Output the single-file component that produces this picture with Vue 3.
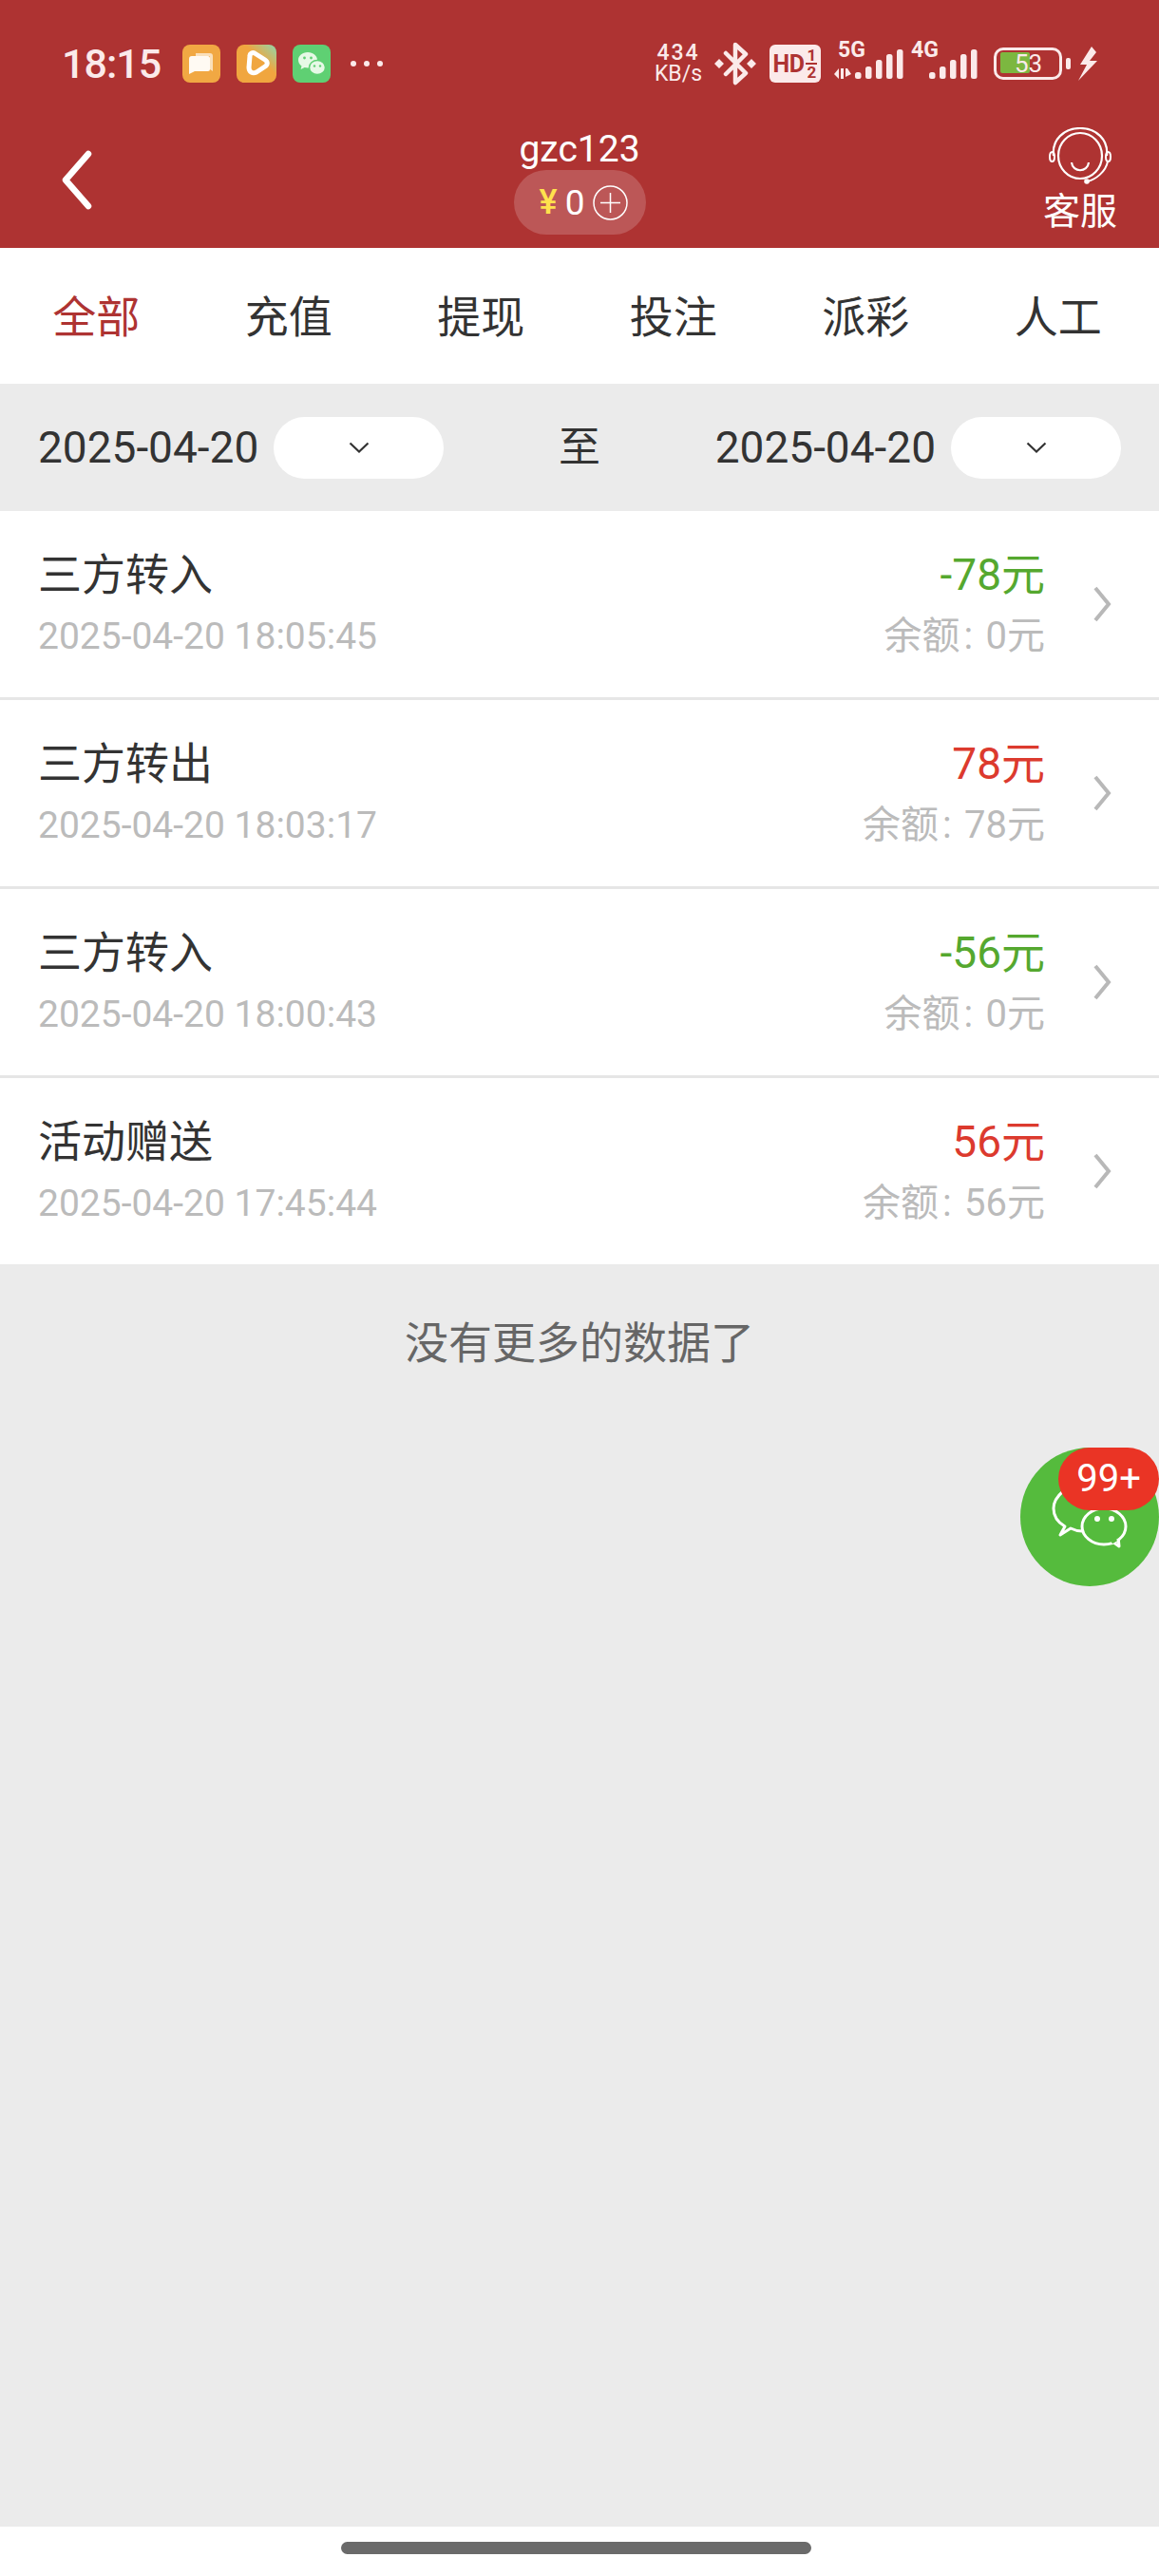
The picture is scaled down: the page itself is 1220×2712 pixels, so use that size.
<script setup>
const tabs = ['全部', '充值', '提现', '投注', '派彩', '人工']
const rows = [
  { title: '三方转入', time: '2025-04-20 18:05:45', amount: '-78元', balance: '0元', income: false },
  { title: '三方转出', time: '2025-04-20 18:03:17', amount: '78元', balance: '78元', income: true },
  { title: '三方转入', time: '2025-04-20 18:00:43', amount: '-56元', balance: '0元', income: false },
  { title: '活动赠送', time: '2025-04-20 17:45:44', amount: '56元', balance: '56元', income: true }
]
const bars5 = [7, 13, 20, 26, 31]
</script>

<template>
  <div class="page">
    <header class="header">
      <div class="status">
        <span class="clock">18:15</span>
        <svg class="app first" width="40" height="40" viewBox="0 0 40 40">
          <rect width="40" height="40" rx="8" fill="#f1a843" />
          <path d="M14 9h15a3 3 0 0 1 3 3v16l-3-2V12H14z" fill="#fdeeda" opacity=".8" />
          <path d="M10 12h17a2 2 0 0 1 2 2v12a2 2 0 0 1-2 2H13l-6 3V15a3 3 0 0 1 3-3z" fill="#fffaf3" />
        </svg>
        <svg class="app" width="42" height="40" viewBox="0 0 42 40">
          <defs>
            <linearGradient id="playGrad" x1="0" y1="1" x2="1" y2="0">
              <stop offset="0.6" stop-color="#f0a63f" />
              <stop offset="1" stop-color="#8fd6ae" />
            </linearGradient>
          </defs>
          <rect width="42" height="40" rx="8" fill="url(#playGrad)" />
          <path d="M14 12c0-3 3-4 5-3l11 7c3 2 3 5 0 7l-9 6c-4 2-8 0-8-5z" fill="none" stroke="#fff" stroke-width="5" stroke-linejoin="round" />
        </svg>
        <svg class="app" width="40" height="40" viewBox="0 0 40 40">
          <rect width="40" height="40" rx="8" fill="#5fd073" />
          <path d="M16 8c-6 0-10 3.700-10 8.200 0 2.600 1.300 4.700 3.500 6.200L8.600 26l4-2c1.100.3 2.200.4 3.400.4 5.700 0 10-3.700 10-8.200S21.700 8 16 8z" fill="#e6f9e6" />
          <ellipse cx="26" cy="24" rx="8.500" ry="7.500" fill="#e6f9e6" stroke="#5fd073" stroke-width="1.500" />
          <circle cx="12.500" cy="14" r="1.400" fill="#5fd073" /><circle cx="19.500" cy="14" r="1.400" fill="#5fd073" />
          <circle cx="23" cy="22.500" r="1.200" fill="#5fd073" /><circle cx="29" cy="22.500" r="1.200" fill="#5fd073" />
        </svg>
        <span class="dots"><i></i><i></i><i></i></span>

        <span class="speed"><b>434</b><em>KB/s</em></span>
        <svg class="bt" width="44" height="46" viewBox="0 0 44 46">
          <path d="M12 12l21 21-11 10V3l11 10-21 21" fill="none" stroke="#fbeaea" stroke-width="4.500" stroke-linejoin="round" stroke-linecap="round" />
          <path d="M5 18l5 5-5 5-5-5zM39 18l5 5-5 5-5-5z" fill="#fbeaea" />
        </svg>
        <span class="hd"><b>HD</b><span class="hd-nums"><i class="top">1</i><i>2</i></span></span>
        <span class="signal five">
          <span class="net">5G</span>
          <svg width="73" height="38" viewBox="0 0 73 38">
            <path d="M5 24v11L0 30zM7 24h3v11H7zM12 24h2l4 6-6 3z" fill="#fbeaea" />
            <rect v-for="(h, i) in bars5" :key="i" :x="22 + i * 11" :y="35 - h" width="6.500" :height="h" rx="2.500" fill="#fbeaea" />
          </svg>
        </span>
        <span class="signal four">
          <span class="net">4G</span>
          <svg width="71" height="38" viewBox="0 0 71 38">
            <rect v-for="(h, i) in bars5" :key="i" :x="20 + i * 11" :y="35 - h" width="6.500" :height="h" rx="2.500" fill="#fbeaea" />
          </svg>
        </span>
        <span class="battery"><span class="fill"></span><span class="level">53</span></span>
        <span class="nub"></span>
        <svg class="bolt" width="21" height="36" viewBox="0 0 21 36">
          <path d="M14 0L2 19h7L0 36l20-21h-8l7-9z" fill="#fbeaea" />
        </svg>
      </div>

      <div class="nav">
        <svg class="back" width="32" height="64" viewBox="0 0 32 64">
          <path d="M28 5L4 32.500 28 60" fill="none" stroke="#fff" stroke-width="6.500" stroke-linecap="round" stroke-linejoin="round" />
        </svg>
        <div class="account">
          <div class="user">gzc123</div>
          <div class="wallet">
            <span class="yen">¥</span>
            <span class="money">0</span>
            <svg width="37" height="37" viewBox="0 0 37 37">
              <circle cx="18.500" cy="18.500" r="17.500" fill="none" stroke="#fff" stroke-width="1.500" />
              <path d="M18.500 8v21M8 18.500h21" stroke="#fff" stroke-width="1.500" />
            </svg>
          </div>
        </div>
        <div class="service">
          <svg width="66" height="60" viewBox="0 0 66 60">
            <path d="M5 30C3 13 16 1 33 1s30 12 28 29" fill="none" stroke="#fff" stroke-width="2.200" />
            <ellipse cx="33" cy="30" rx="23" ry="24" fill="none" stroke="#fff" stroke-width="2.200" />
            <path d="M24 37c1 11 17 11 18 0" fill="none" stroke="#fff" stroke-width="2.200" />
            <ellipse cx="3.500" cy="31" rx="2.500" ry="5" fill="none" stroke="#fff" stroke-width="2" />
            <ellipse cx="62.500" cy="31" rx="2.500" ry="5" fill="none" stroke="#fff" stroke-width="2" />
            <path d="M62 36c-2 11-13 19-21 21" fill="none" stroke="#fff" stroke-width="2" />
            <circle cx="40" cy="57" r="2.800" fill="#fff" />
          </svg>
          <span>客服</span>
        </div>
      </div>
    </header>

    <nav class="tabs">
      <span v-for="(t, i) in tabs" :key="t" class="tab" :class="{ active: i === 0 }">{{ t }}</span>
    </nav>

    <section class="filter">
      <div class="date-group">
        <span class="date">2025-04-20</span>
        <span class="pill">
          <svg width="22" height="12" viewBox="0 0 22 12"><path d="M1.500 1.500L11 10.500l9.500-9" fill="none" stroke="#333" stroke-width="2.200" /></svg>
        </span>
      </div>
      <span class="to">至</span>
      <div class="date-group">
        <span class="date">2025-04-20</span>
        <span class="pill">
          <svg width="22" height="12" viewBox="0 0 22 12"><path d="M1.500 1.500L11 10.500l9.500-9" fill="none" stroke="#333" stroke-width="2.200" /></svg>
        </span>
      </div>
    </section>

    <section class="list">
      <article v-for="r in rows" :key="r.time" class="row">
        <div class="left">
          <div class="title">{{ r.title }}</div>
          <div class="sub">{{ r.time }}</div>
        </div>
        <div class="right">
          <div class="amount" :class="r.income ? 'in' : 'out'">{{ r.amount }}</div>
          <div class="sub balance">余额<span class="colon">:</span> {{ r.balance }}</div>
        </div>
        <svg class="arrow" width="20" height="40" viewBox="0 0 20 40">
          <path d="M3 3l14 17L3 37" fill="none" stroke="#b8b8b8" stroke-width="4" />
        </svg>
      </article>
    </section>

    <p class="nomore">没有更多的数据了</p>

    <div class="spacer"></div>

    <footer class="home"><span></span></footer>

    <div class="fab">
      <svg width="84" height="66" viewBox="0 0 84 66">
        <path d="M12 -6C5 0 2 6 2 12c0 8 5 15 12 19l-5 9 11-7c4 2 8 3 12 3" fill="none" stroke="#fff" stroke-width="3" stroke-linejoin="round" />
        <path d="M64 47l7 5-1-10" fill="#55bb3d" stroke="#fff" stroke-width="3" stroke-linejoin="round" />
        <ellipse cx="55" cy="31" rx="23" ry="19" fill="#55bb3d" stroke="#fff" stroke-width="3" />
        <path d="M63 47.500l5-3" stroke="#55bb3d" stroke-width="4" />
        <circle cx="48" cy="23" r="3" fill="#fff" /><circle cx="63" cy="23" r="3" fill="#fff" />
      </svg>
      <span class="badge">99+</span>
    </div>
  </div>
</template>

<style>
html, body { margin: 0; padding: 0; background: #ebebeb; }
</style>

<style scoped>
.page {
  position: relative;
  width: 1220px;
  height: 2712px;
  display: flex;
  flex-direction: column;
  overflow: hidden;
  background: #ebebeb;
  font-family: Roboto, "Noto Sans CJK SC", sans-serif;
  color: #333;
}
.header { height: 261px; background: #ae3332; box-sizing: border-box; color: #fff; }
.status { display: flex; align-items: center; height: 46px; padding: 44px 64px 0 65px; color: #fbeaea; }
.clock { width: 107px; font-size: 43px; line-height: 46px; font-weight: 500; letter-spacing: -1px; white-space: nowrap; }
.app { flex: none; margin-left: 17px; }
.app.first { margin-left: 20px; }
.dots { display: flex; gap: 8px; margin-left: 21px; margin-right: auto; }
.dots i { width: 6px; height: 6px; border-radius: 50%; background: #fbeaea; }
.speed { display: flex; flex-direction: column; align-items: center; width: 50px; margin-right: 13px; }
.speed b { font-size: 23px; line-height: 22px; font-weight: 500; letter-spacing: 2px; }
.speed em { font-size: 23px; line-height: 22px; font-style: normal; white-space: nowrap; }
.bt { flex: none; margin-right: 14px; }
.hd {
  width: 54px; height: 40px; flex: none; border-radius: 6px; background: #fbeaea; color: #ae3332;
  display: flex; align-items: center; justify-content: center; margin-right: 14px;
}
.hd b { font-size: 25px; font-weight: 700; letter-spacing: -0.5px; }
.hd-nums { display: flex; flex-direction: column; align-items: center; margin-left: 2px; }
.hd-nums i { width: 12px; text-align: center; font-size: 17px; line-height: 16px; font-style: normal; font-weight: 700; }
.hd-nums .top { border-bottom: 2px solid #ae3332; }
.signal { position: relative; display: block; height: 38px; flex: none; }
.signal svg { display: block; }
.signal.five { width: 73px; margin-right: 7px; }
.signal.four { width: 71px; margin-right: 17px; }
.net { position: absolute; top: -5px; font-size: 23px; line-height: 20px; font-weight: 700; }
.five .net { left: 4px; }
.four .net { left: 1px; }
.battery {
  position: relative; width: 72px; height: 34px; box-sizing: border-box; flex: none;
  border: 3px solid #fbeaea; border-radius: 10px;
}
.fill { position: absolute; left: 4px; top: 2px; width: 31px; height: 22px; border-radius: 2px; background: #7cb740; }
.level { position: absolute; left: 19px; top: 0; font-size: 26px; line-height: 28px; color: #fbeaea; }
.nub { width: 5px; height: 12px; background: #fbeaea; border-radius: 2px; margin-left: 4px; flex: none; }
.bolt { flex: none; margin-left: 8px; }

.nav { position: relative; display: flex; justify-content: space-between; padding: 0 44px 0 65px; }
.back { margin-top: 67px; flex: none; }
.account { position: absolute; left: 0; right: 0; top: 44px; display: flex; flex-direction: column; align-items: center; }
.user { font-size: 39px; line-height: 46px; height: 45px; }
.wallet {
  display: flex; align-items: center; justify-content: center; box-sizing: border-box;
  width: 139px; height: 68px; padding-left: 9px; border-radius: 34px; background: rgba(255, 255, 255, 0.18);
  font-size: 37px;
}
.yen { color: #ffe14d; margin-right: 8px; font-size: 36px; font-weight: 500; }
.money { margin-right: 9px; }
.service { display: flex; flex-direction: column; align-items: center; margin-top: 44px; font-size: 39px; line-height: 46px; }
.service svg { display: block; margin-bottom: 6px; }

.tabs { height: 143px; display: grid; grid-template-columns: repeat(6, 1fr); align-items: center; background: #fff; padding-right: 5px; }
.tab { text-align: center; font-size: 46px; line-height: 60px; padding-top: 3px; color: #333; }
.tab.active { color: #ae3332; }

.filter { height: 134px; box-sizing: border-box; display: flex; align-items: center; justify-content: space-between; padding: 0 40px; }
.date-group { display: flex; align-items: center; gap: 16px; }
.date { font-size: 46px; line-height: 60px; color: #333; }
.pill { width: 179px; height: 65px; border-radius: 33px; background: #fff; display: flex; align-items: center; justify-content: center; }
.to { font-size: 44px; line-height: 60px; color: #333; }

.list { display: flex; flex-direction: column; gap: 3px; background: #e6e6e6; }
.row { height: 196px; box-sizing: border-box; background: #fff; display: flex; align-items: center; padding: 0 50px 0 40px; }
.left { flex: 1; padding-bottom: 2px; }
.right { text-align: right; margin-right: 50px; padding-bottom: 2px; }
.title, .amount { font-size: 46px; line-height: 60px; }
.title { color: #333; }
.amount.out { color: #55a82f; }
.amount.in { color: #dc3a2e; }
.sub { font-size: 39px; line-height: 50px; margin-top: 10px; color: #bbb; white-space: nowrap; }
.balance { font-size: 40px; word-spacing: 3.500px; }
.colon { margin-left: 4px; }
.arrow { flex: none; }

.nomore { margin: 53px 0 0; text-align: center; font-size: 46px; line-height: 60px; color: #666; }
.spacer { flex: 1; }
.home { height: 52px; background: #fff; display: flex; justify-content: center; padding-top: 16px; box-sizing: border-box; }
.home span { width: 495px; height: 13px; margin-left: -8px; border-radius: 7px; background: #6a6a6a; }

.fab {
  position: absolute; left: 1074px; top: 1524px; width: 146px; height: 146px; border-radius: 50%;
  background: #55bb3d; display: flex; align-items: center; justify-content: center;
}
.fab svg { margin: 24px 0 0 4px; overflow: visible; }
.badge {
  position: absolute; right: 0; top: 0; width: 106px; height: 66px; border-radius: 33px;
  background: #ea3425; color: #fff; font-size: 40px; line-height: 66px; text-align: center;
}
</style>
